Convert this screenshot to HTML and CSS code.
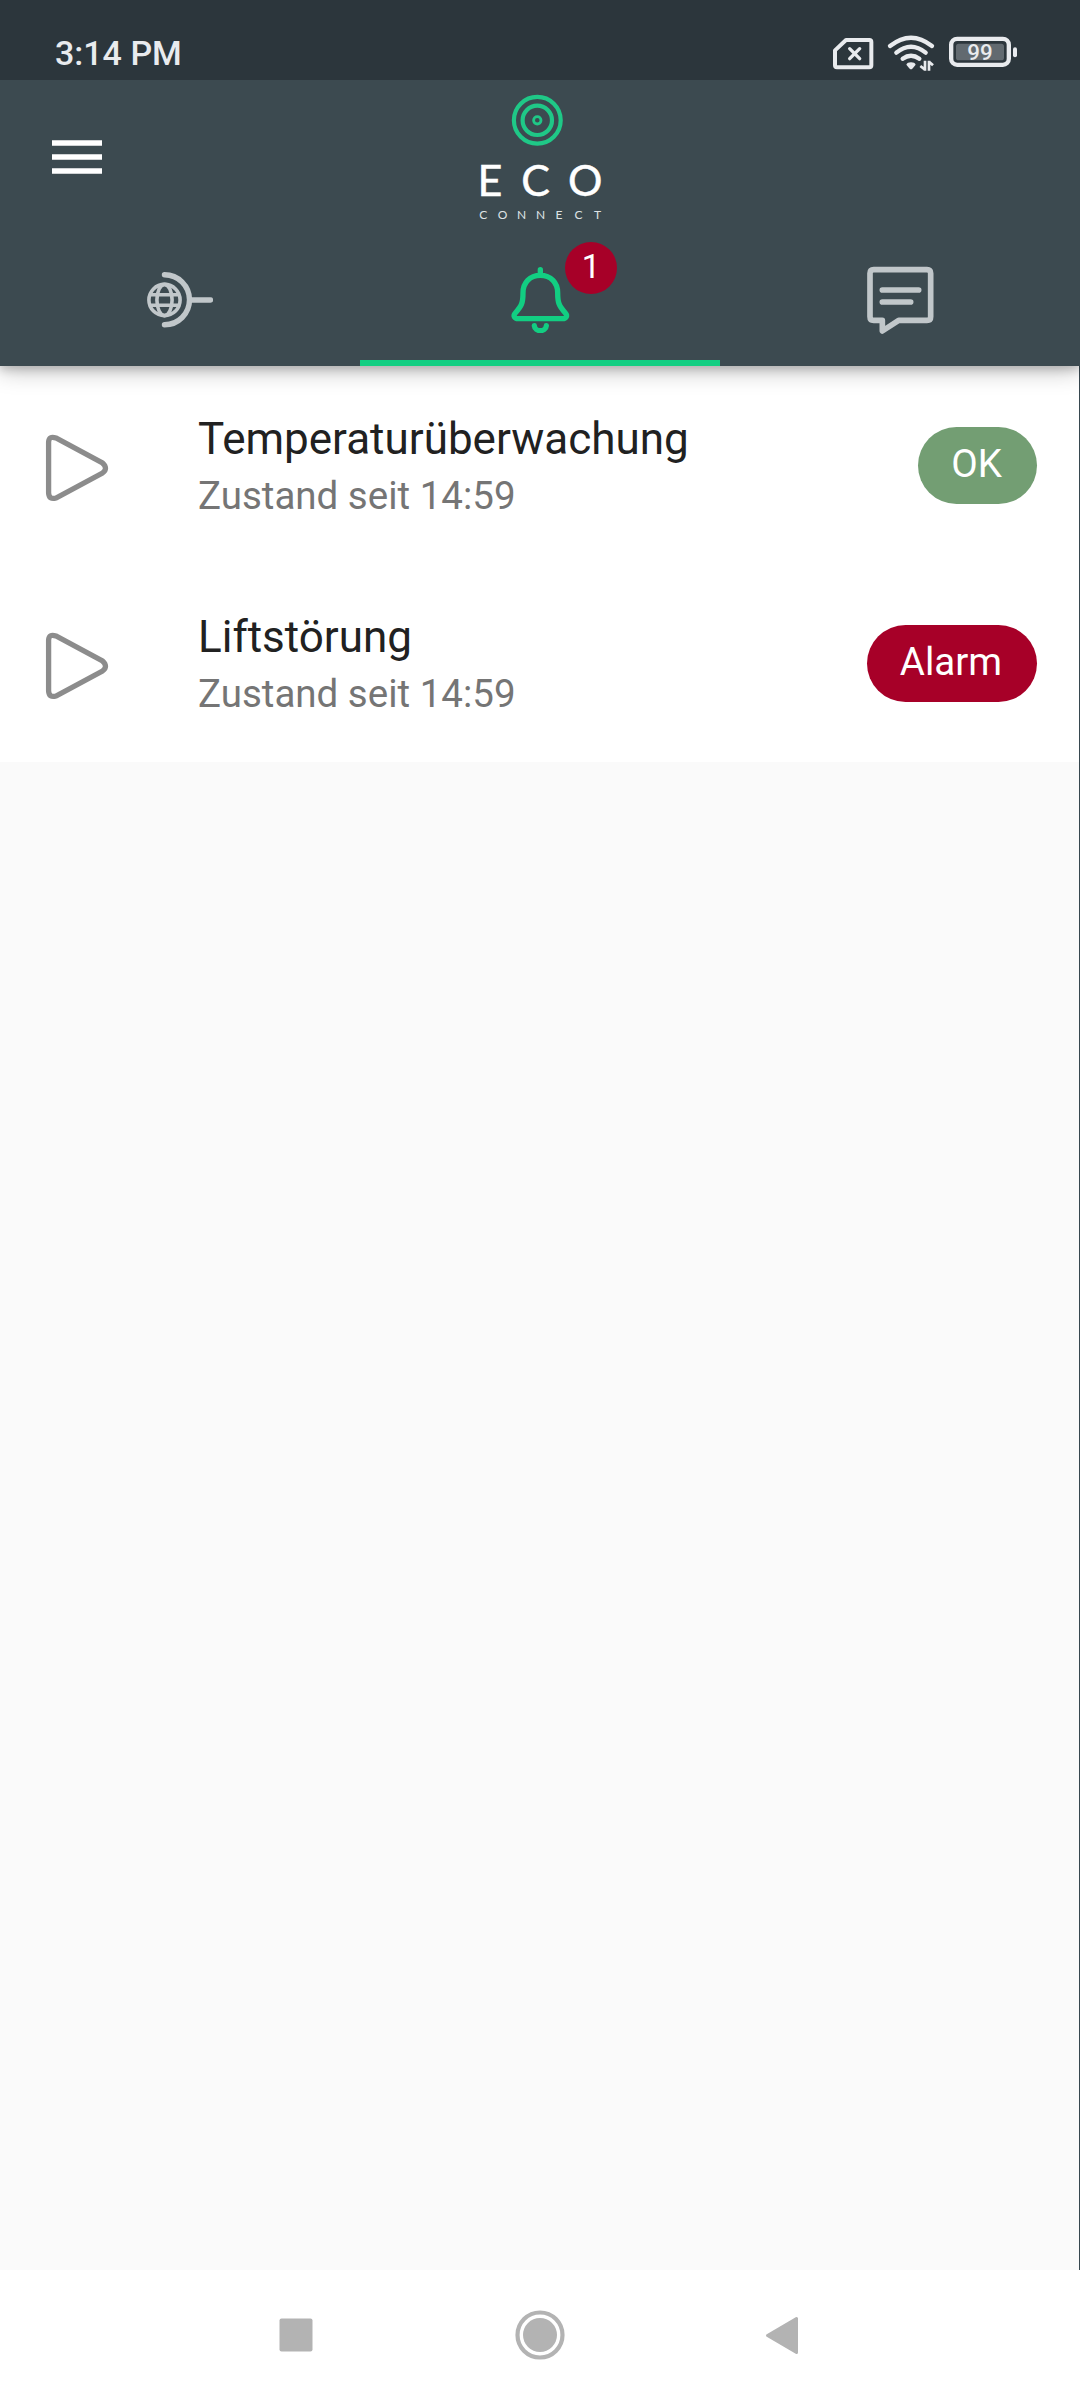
FILE: index.html
```html
<!DOCTYPE html>
<html lang="de">
<head>
<meta charset="UTF-8" />
<meta name="viewport" content="width=device-width, initial-scale=1" />
<title>ECO Connect</title>
<link rel="stylesheet" href="styles.css">
</head>
<body>
<div class="status-bar">
    <span class="clock">3:14 PM</span>
    <svg width="188" height="48" viewBox="0 0 564 144">
        <g fill="none" stroke="#e9ebee">
            <path d="M42 42H112Q118 42 118 48V118Q118 124 112 124H15Q9 124 9 118V73Z" stroke-width="12" stroke-linejoin="round" />
            <path d="M53 68L83 98M83 68L53 98" stroke-width="10" stroke-linecap="round" />
            <g stroke-width="13" stroke-linecap="round">
                <path d="M174 60Q237 10 300 60" />
                <path d="M193 80Q237 44 281 80" />
                <path d="M212 98Q237 80 262 98" />
            </g>
            <rect x="357.500" y="38.500" width="173" height="78" rx="18" stroke-width="13" />
        </g>
        <path d="M223 116Q226 109 237 109Q248 109 251 116L241 128Q237 131 233 128Z" fill="#e9ebee" />
        <path d="M279 104V134M279 131L265 120M291 134V104M291 107L303 118" fill="none" stroke="#e9ebee" stroke-width="8" />
        <rect x="372" y="53" width="144" height="50" rx="8" fill="#626a70" />
        <rect x="543" y="64" width="12" height="30" rx="6" fill="#e9ebee" />
        <text class="battery-text" x="444" y="103">99</text>
    </svg>
</div>

<header class="header">
    <div class="app-bar">
        <svg width="50" height="34" viewBox="0 0 50 34">
            <path d="M0 3H50M0 17H50M0 31H50" stroke="#fff" stroke-width="5.6" />
        </svg>
        <svg class="logo" width="140" height="140" viewBox="0 0 140 140">
            <g fill="none" stroke="#1fc887">
                <circle cx="67.3" cy="33.3" r="23.4" stroke-width="4.2" />
                <circle cx="67.3" cy="33.3" r="14.7" stroke-width="4.2" />
                <circle cx="67.3" cy="33.3" r="3.7" stroke-width="2.8" />
            </g>
            <text class="logo-name" x="7.500 51.300 98" y="108.500">ECO</text>
            <text class="logo-sub" x="9.3 27.8 47 66 85.6 104.5 124" y="132">CONNECT</text>
        </svg>
    </div>
    <nav class="tabs">
        <div class="tab">
            <svg width="66" height="66" viewBox="0 0 66 66" fill="none" stroke="#c1c7ca">
                <g stroke-width="3.6">
                    <circle cx="17.5" cy="33" r="15.6" />
                    <ellipse cx="17.5" cy="33" rx="7.6" ry="15.6" />
                    <path d="M3 27.8H32M3 38.2H32" />
                </g>
                <path d="M17.5 7.8A25 25 0 0 1 17.5 57.8M43.5 33H63.5" stroke-width="5.4" stroke-linecap="round" />
            </svg>
        </div>
        <div class="tab active">
            <svg width="66" height="66" viewBox="0 0 198 198" fill="none" stroke="#12ce82" stroke-width="16" stroke-linecap="round" stroke-linejoin="round">
                <path d="M100 8V20M100 25C68 25 48 48 48 77C48 108 44 117 25 138C17 147 23 155 33 155H167C177 155 183 147 175 138C156 117 152 108 152 77C152 48 132 25 100 25Z" />
                <path d="M82 176C84 196 116 196 118 176" />
            </svg>
            <span class="tab-badge">1</span>
        </div>
        <div class="tab">
            <svg width="68" height="68" viewBox="0 0 204 204" fill="none" stroke="#c1c7ca" stroke-width="17" stroke-linecap="round" stroke-linejoin="round">
                <path d="M23 11H183Q194 11 194 22V152Q194 163 183 163H98L49 195V163H23Q12 163 12 152V22Q12 11 23 11Z" />
                <path d="M49 72H158M49 108H134" />
            </svg>
        </div>
    </nav>
</header>

<main class="content">
    <div class="row">
        <svg class="play" width="66" height="70" viewBox="0 0 66 70">
            <path d="M4.6 9V60Q5 67 12 65L58.500 40Q64.500 35.500 58.500 30L12 5Q5 2.500 4.600 9Z" />
        </svg>
        <div class="row-text">
            <div class="title">Temperaturüberwachung</div>
            <div class="subtitle">Zustand seit 14:59</div>
        </div>
        <span class="state ok">OK</span>
    </div>
    <div class="row">
        <svg class="play" width="66" height="70" viewBox="0 0 66 70">
            <path d="M4.6 9V60Q5 67 12 65L58.500 40Q64.500 35.500 58.500 30L12 5Q5 2.500 4.600 9Z" />
        </svg>
        <div class="row-text">
            <div class="title">Liftstörung</div>
            <div class="subtitle">Zustand seit 14:59</div>
        </div>
        <span class="state alarm">Alarm</span>
    </div>
</main>

<footer class="nav-bar">
    <svg width="50" height="50" viewBox="0 0 50 50">
        <rect x="8.5" y="8.5" width="33" height="33" rx="2" />
    </svg>
    <svg width="50" height="50" viewBox="0 0 50 50">
        <circle cx="25" cy="25" r="22.5" fill="none" stroke="#b3b3b3" stroke-width="4.2" />
        <circle cx="25" cy="25" r="17" />
    </svg>
    <svg width="50" height="50" viewBox="0 0 50 50">
        <path d="M9.5 25.500L38.500 8.500V42.500Z" stroke="#b3b3b3" stroke-width="3" stroke-linejoin="round" />
    </svg>
</footer>
</body>
</html>
```
FILE: styles.css
```css
* {
    box-sizing: border-box;
}
body {
    margin: 0;
    height: 2400px;
    display: flex;
    flex-direction: column;
    font-family: Roboto, "Liberation Sans", sans-serif;
    background: #fafafa;
}
svg {
    display: block;
    flex: none;
}
.status-bar {
    position: relative;
    z-index: 2;
    height: 80px;
    padding: 26px 60px 0 55px;
    display: flex;
    justify-content: space-between;
    align-items: flex-start;
    background: #2c363c;
}
.clock {
    font-size: 34px;
    line-height: 54px;
    font-weight: 500;
    color: #e9ebee;
}
.battery-text {
    font-size: 67px;
    font-weight: 500;
    text-anchor: middle;
    fill: #e9ebee;
}
.header {
    position: relative;
    z-index: 1;
    height: 286px;
    background: #3c4a50;
    box-shadow: 0 4px 8px rgba(0, 0, 0, 0.15), 0 4px 22px rgba(0, 0, 0, 0.27);
}
.app-bar {
    height: 154px;
    padding-left: 52px;
    display: flex;
    align-items: center;
}
.logo {
    margin-left: 368px;
    align-self: flex-start;
    margin-top: 7px;
}
.logo-name {
    font-family: Lato, sans-serif;
    font-size: 43px;
    fill: #fff;
    stroke: #fff;
    stroke-width: 0.5px;
}
.logo-sub {
    font-family: Lato, sans-serif;
    font-size: 12px;
    fill: #dfe3e5;
}
.tabs {
    height: 132px;
    display: flex;
}
.tab {
    position: relative;
    flex: 1;
    display: flex;
    align-items: center;
    justify-content: center;
}
.tab.active {
    box-shadow: inset 0 -6px #12ce82;
}
.tab-badge {
    position: absolute;
    top: 8px;
    left: 205px;
    width: 52px;
    height: 52px;
    border-radius: 50%;
    background: #a70028;
    color: #fff;
    font-size: 33px;
    line-height: 49px;
    text-align: center;
}
.content {
    flex: 1;
    border-right: 1px solid #37474f;
}
.row {
    height: 198px;
    padding: 0 42px 0 44px;
    display: flex;
    align-items: center;
    background: #fff;
}
.play {
    margin-top: 6px;
}
.play path {
    fill: none;
    stroke: #8c8c8c;
    stroke-width: 5.3;
}
.row-text {
    flex: 1;
    margin: 3px 0 0 88px;
}
.title {
    font-size: 44px;
    line-height: 58px;
    color: #212121;
}
.subtitle {
    font-size: 38.5px;
    line-height: 55px;
    color: #757575;
}
.state {
    height: 77px;
    padding: 0 35px 0 33px;
    border-radius: 39px;
    font-size: 38.5px;
    line-height: 73px;
    color: #fff;
}
.state.ok {
    background: #739e73;
}
.state.alarm {
    background: #a70028;
}
.nav-bar {
    height: 130px;
    padding: 0 272px 0 271px;
    display: flex;
    align-items: center;
    justify-content: space-between;
    background: #fff;
}
.nav-bar svg {
    fill: #b3b3b3;
}
```
